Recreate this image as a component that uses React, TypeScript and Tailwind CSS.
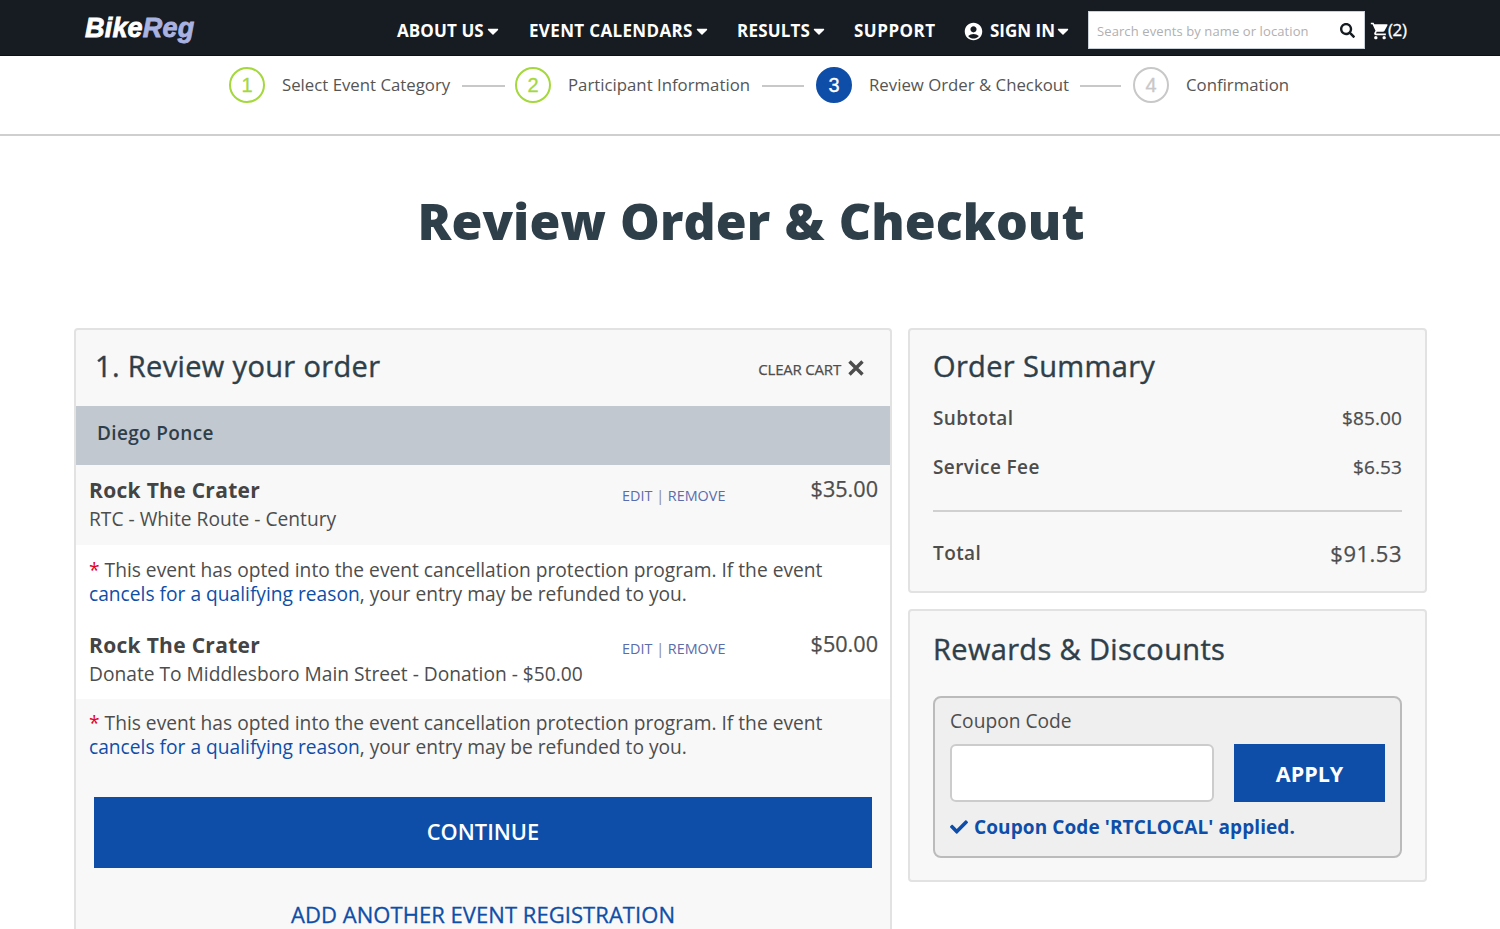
import { useState } from 'react';
import { FaCaretDown, FaCheck, FaSearch } from 'react-icons/fa';
import { MdAccountCircle, MdShoppingCart } from 'react-icons/md';
import clsx from 'clsx';

interface NavItem {
  label: string;
  hasMenu: boolean;
  className: string;
}

interface Step {
  label: string;
  state: 'done' | 'current' | 'upcoming';
  labelClass: string;
  lineClass?: string;
}

interface OrderItem {
  id: number;
  event: string;
  detail: string;
  price: string;
}

const NAV_ITEMS: NavItem[] = [
  { label: 'ABOUT US', hasMenu: true, className: 'w-[132px] tracking-[0.1px]' },
  { label: 'EVENT CALENDARS', hasMenu: true, className: 'w-[208px] tracking-[0.35px]' },
  { label: 'RESULTS', hasMenu: true, className: 'w-[117px] tracking-[0.2px]' },
  { label: 'SUPPORT', hasMenu: false, className: 'w-[111px] tracking-[0.5px]' },
];

const STEPS: Step[] = [
  { label: 'Select Event Category', state: 'done', labelClass: 'w-[180px]', lineClass: 'w-[43px] mr-[10px]' },
  { label: 'Participant Information', state: 'done', labelClass: 'w-[194px]', lineClass: 'w-[42px] mr-3' },
  { label: 'Review Order & Checkout', state: 'current', labelClass: 'w-[211px]', lineClass: 'w-[41px] mr-3' },
  { label: 'Confirmation', state: 'upcoming', labelClass: 'w-[120px]' },
];

const ORDER_ITEMS: OrderItem[] = [
  { id: 1, event: 'Rock The Crater', detail: 'RTC - White Route - Century', price: '$35.00' },
  { id: 2, event: 'Rock The Crater', detail: 'Donate To Middlesboro Main Street - Donation - $50.00', price: '$50.00' },
];

function Header() {
  return (
    <header className="flex h-14 items-start border-b border-[#0d1117] bg-[#171c23] pl-[85px] text-white">
      <a className="mt-3 w-[312px] font-['Liberation_Sans',sans-serif] text-[27px] leading-8 font-bold tracking-[0.2px] italic [-webkit-text-stroke:0.8px]">
        Bike<span className="text-[#a9b3e2]">Reg</span>
      </a>
      <nav className="mt-[19px] flex text-[17px] leading-6 font-bold">
        {NAV_ITEMS.map((item) => (
          <a key={item.label} className={clsx('flex shrink-0 items-center whitespace-nowrap', item.className)}>
            {item.label}
            {item.hasMenu && <FaCaretDown className="ml-[3px] h-[18px] w-3" />}
          </a>
        ))}
        <a className="flex w-[123px] shrink-0 items-center whitespace-nowrap">
          <MdAccountCircle className="mr-[6px] -ml-0.5 h-[21px] w-[21px]" />
          SIGN IN
          <FaCaretDown className="ml-[2px] h-[18px] w-3" />
        </a>
      </nav>
      <div className="mt-[11px] flex h-[38px] w-[277px] items-center border border-[#c9d0d8] bg-white px-2">
        <input
          className="w-[240px] pt-1 text-[13px] tracking-[0.1px] text-gray-700 outline-none placeholder:text-[#b0b0b0]"
          placeholder="Search events by name or location"
        />
        <FaSearch className="ml-[3px] h-[15px] w-[15px] shrink-0 text-[#171c23]" />
      </div>
      <a className="mt-[18px] ml-[5px] flex items-center text-[17px] leading-6 tracking-[-0.4px] [-webkit-text-stroke:0.3px]">
        <MdShoppingCart className="mt-0.5 -mr-0.5 h-5 w-5" />
        (2)
      </a>
    </header>
  );
}

function ProgressSteps() {
  return (
    <div className="flex h-20 items-start border-b-2 border-[#cfcfcf] pt-[11px] pl-[229px]">
      {STEPS.map((step, index) => (
        <div key={step.label} className="flex h-9 items-center">
          <span
            className={clsx(
              "mr-[17px] flex h-9 w-9 items-center justify-center rounded-full border-2 font-['Liberation_Sans',sans-serif] text-[20px] [-webkit-text-stroke:0.3px]",
              step.state === 'done' && 'border-[#a4d83c] text-[#a4d83c]',
              step.state === 'current' && 'border-[#0e4ea8] bg-[#0e4ea8] text-white',
              step.state === 'upcoming' && 'border-[#c8c8c8] text-[#c8c8c8]'
            )}
          >
            {index + 1}
          </span>
          <span className={clsx('text-[16.8px] whitespace-nowrap text-[#555]', step.labelClass)}>{step.label}</span>
          {step.lineClass && <span className={clsx('mt-px h-0.5 bg-[#c8c8c8]', step.lineClass)} />}
        </div>
      ))}
    </div>
  );
}

function SectionTitle({ children, className }: { children: React.ReactNode; className: string }) {
  return (
    <h2 className={clsx('text-[29px] leading-10 text-[#2f3f4a] [-webkit-text-stroke:0.4px]', className)}>
      {children}
    </h2>
  );
}

function OrderRow({ item }: { item: OrderItem }) {
  return (
    <div className="flex h-20 justify-between pr-3 pl-[13px]">
      <div className="w-[533px] shrink-0">
        <h3 className="mt-[11px] text-[21px] leading-7 font-bold tracking-[0.3px] text-[#444]">{item.event}</h3>
        <p className="text-[19.2px] leading-[30px] whitespace-nowrap">{item.detail}</p>
      </div>
      <div className={clsx('flex-1 text-[14.4px] leading-6 text-[#5a6cab]', item.id === 1 ? 'mt-[19px]' : 'mt-[17px]')}>
        <a>EDIT</a> <span className="text-[#888]">|</span> <a>REMOVE</a>
      </div>
      <span className="mt-[9px] text-[21.6px] leading-[30px] [-webkit-text-stroke:0.25px]">{item.price}</span>
    </div>
  );
}

function ProtectionNote() {
  return (
    <p className="pr-3 pl-[13px] text-[19.2px] leading-6">
      <span className="text-[#e4002b]">*</span> This event has opted into the event cancellation protection program. If the event
      <br />
      <a className="text-[#0e4ea8]">cancels for a qualifying reason</a>, your entry may be refunded to you.
    </p>
  );
}

function OrderReview() {
  const [first, second] = ORDER_ITEMS;

  return (
    <section className="h-[601px] w-[818px] shrink-0 rounded-t-sm border-2 border-b-0 border-[#e2e2e2] bg-[#f8f8f8]">
      <div className="flex h-[76px] items-start justify-between pr-[26px] pl-[19px]">
        <SectionTitle className="mt-4 tracking-[0.35px]">1. Review your order</SectionTitle>
        <button className="mt-[27px] flex items-center text-[15px] leading-6 tracking-[-0.2px] [-webkit-text-stroke:0.25px]">
          CLEAR CART
          <svg viewBox="0 0 16 16" className="mb-[3px] ml-[7px] h-4 w-4" fill="none" stroke="currentColor" strokeWidth="3.4">
            <path d="M1.5 1.5l13 13M14.5 1.5l-13 13" />
          </svg>
        </button>
      </div>
      <div className="h-[59px] bg-[#c1c8d0] pt-3 pl-[21px] text-[19px] leading-[30px] font-semibold tracking-[0.35px] text-[#2f3f4a]">
        Diego Ponce
      </div>
      <OrderRow item={first} />
      <div className="h-[154px] bg-white pt-[13px]">
        <ProtectionNote />
        <div className="mt-[14px]">
          <OrderRow item={second} />
        </div>
      </div>
      <div className="pt-3">
        <ProtectionNote />
      </div>
      <button className="mt-[38px] ml-[18px] flex h-[71px] w-[778px] items-center justify-center bg-[#0e4ea8] pb-px text-[21.8px] font-semibold text-white">
        CONTINUE
      </button>
      <a className="mt-[30px] block text-center text-[22px] leading-8 tracking-[0.05px] text-[#0e4ea8] [-webkit-text-stroke:0.3px]">
        ADD ANOTHER EVENT REGISTRATION
      </a>
    </section>
  );
}

function OrderSummary() {
  return (
    <section className="h-[265px] rounded-sm border-2 border-[#e2e2e2] bg-[#f8f8f8] px-[23px]">
      <SectionTitle className="mt-4 tracking-[0.35px]">Order Summary</SectionTitle>
      <div className="mt-[17px] flex justify-between text-[19px] leading-[30px]">
        <span className="font-semibold tracking-[0.4px]">Subtotal</span>
        <span className="tracking-[0.1px] [-webkit-text-stroke:0.25px]">$85.00</span>
      </div>
      <div className="mt-[19px] flex justify-between text-[19px] leading-[30px]">
        <span className="font-semibold tracking-[0.4px]">Service Fee</span>
        <span className="tracking-[0.1px] [-webkit-text-stroke:0.25px]">$6.53</span>
      </div>
      <div className="mt-[28px] h-0.5 bg-[#d0d0d0]" />
      <div className="mt-[26px] flex justify-between leading-[30px]">
        <span className="text-[19px] font-semibold tracking-[0.4px]">Total</span>
        <span className="text-[22px] tracking-[0.5px] [-webkit-text-stroke:0.25px]">$91.53</span>
      </div>
    </section>
  );
}

function RewardsDiscounts() {
  const [code, setCode] = useState('');

  return (
    <section className="h-[273px] rounded-sm border-2 border-[#e2e2e2] bg-[#f8f8f8] px-[23px]">
      <SectionTitle className="mt-[18px] tracking-[0.35px]">Rewards &amp; Discounts</SectionTitle>
      <div className="mt-[27px] h-[162px] rounded-lg border-2 border-[#bbb] bg-[#efefef] px-[15px]">
        <label className="mt-2 block text-[19.2px] leading-[30px]">Coupon Code</label>
        <div className="mt-2 flex justify-between">
          <input
            className="h-[58px] w-[264px] rounded-md border-2 border-[#ccc] bg-white px-3 outline-none"
            value={code}
            onChange={(e) => setCode(e.target.value)}
          />
          <button className="h-[58px] w-[151px] bg-[#0e4ea8] pt-0.5 text-[21.5px] font-bold text-white">APPLY</button>
        </div>
        <p className="mt-[10px] flex items-center text-[19px] leading-[30px] font-bold tracking-[0.1px] text-[#0e4ea8]">
          <FaCheck className="mr-[6px] h-[18px] w-[18px]" />
          Coupon Code 'RTCLOCAL' applied.
        </p>
      </div>
    </section>
  );
}

export default function App() {
  return (
    <div className="h-[929px] overflow-hidden bg-white font-['Open_Sans',sans-serif] text-[#4d4d4d]">
      <Header />
      <ProgressSteps />
      <h1 className="mt-[51px] pl-0.5 text-center text-[50px] leading-[68px] font-extrabold tracking-[0.1px] text-[#2f3f4a] [word-spacing:1px]">
        Review Order &amp; Checkout
      </h1>
      <main className="mt-[73px] flex items-start gap-4 pl-[74px]">
        <OrderReview />
        <div className="flex w-[519px] flex-col gap-4">
          <OrderSummary />
          <RewardsDiscounts />
        </div>
      </main>
    </div>
  );
}
